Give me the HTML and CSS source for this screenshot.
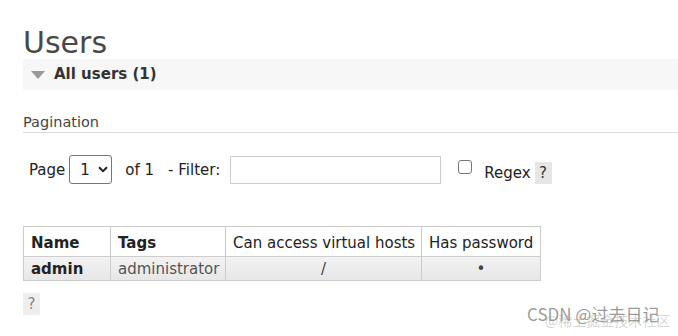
FILE: index.html
```html
<!DOCTYPE html>
<html>
<head>
    <meta charset="utf-8"/>
    <title>Users</title>
    <link rel="stylesheet" href="styles.css">
</head>
<body>
    <div class="main">
        <h1>Users</h1>

        <!-- 사용자 목록 섹션 -->
        <div class="section-head">
            <span class="arrow"></span>
            <span class="section-title">All users (1)</span>
        </div>

        <h3 class="pagination-title">Pagination</h3>

        <div class="pagination-row">
            <span>Page</span>
            <div class="page-select">
                <span>1</span>
                <svg width="10" height="7" viewBox="0 0 10 7">
                    <path d="M1 1.2 L5 5.2 L9 1.2" fill="none" stroke="#222" stroke-width="2"/>
                </svg>
            </div>
            <span class="of-text">of 1</span>
            <span class="filter-label">- Filter:</span>
            <input type="text" class="filter-input">
            <span class="checkbox"></span>
            <span class="regex-label">Regex</span>
            <span class="help">?</span>
        </div>

        <table class="users-table">
            <thead>
                <tr>
                    <th class="col-name bold">Name</th>
                    <th class="col-tags bold">Tags</th>
                    <th class="col-vhosts">Can access virtual hosts</th>
                    <th class="col-pass">Has password</th>
                </tr>
            </thead>
            <tbody>
                <tr>
                    <td class="bold">admin</td>
                    <td class="tag">administrator</td>
                    <td class="center">/</td>
                    <td class="center">&#8226;</td>
                </tr>
            </tbody>
        </table>

        <div class="help help-bottom">?</div>
    </div>

    <div class="watermark">
        <span class="wm-main">CSDN @过去日记</span>
        <span class="wm-sub">@稀土掘金技术社区</span>
    </div>
</body>
</html>
```

FILE: styles.css
```css
body {
    margin: 0;
    font-family: "DejaVu Sans", Verdana, "Noto Sans CJK SC", sans-serif;
    color: #333;
    background: #fff;
}
.main {
    padding: 27px 0 0 23px;
}
h1 {
    margin: 0;
    font-size: 30px;
    font-weight: normal;
    line-height: 32px;
    color: #484848;
}

/* 섹션 헤더 */
.section-head {
    display: flex;
    align-items: center;
    height: 31px;
    padding-left: 8px;
    background-color: #f7f7f7;
}
.arrow {
    width: 0;
    height: 0;
    border-left: 7px solid transparent;
    border-right: 7px solid transparent;
    border-top: 8px solid #999;
    margin-right: 9px;
    margin-top: 1px;
}
.section-title {
    font-size: 15px;
    font-weight: bold;
    color: #333;
    line-height: 31px;
}

/* 페이지네이션 */
.pagination-title {
    margin: 23px 0 0 0;
    font-size: 14.5px;
    font-weight: normal;
    line-height: 18px;
    color: #444;
    padding-bottom: 1px;
    border-bottom: 1px solid #ddd;
}
.pagination-row {
    display: flex;
    align-items: center;
    height: 29px;
    margin-top: 22px;
    padding-left: 6px;
    font-size: 15px;
    color: #222;
}
.page-select {
    display: flex;
    align-items: center;
    box-sizing: border-box;
    width: 43px;
    height: 29px;
    margin-left: 4px;
    padding-left: 10px;
    border: 1px solid #767676;
    border-radius: 3px;
    font-size: 15px;
}
.page-select svg {
    margin-left: 8px;
}
.of-text {
    margin-left: 13px;
}
.filter-label {
    margin-left: 14px;
}
.filter-input {
    box-sizing: border-box;
    width: 211px;
    height: 28px;
    margin: 0 0 0 10px;
    border: 1px solid #ccc;
    padding: 0 4px;
    font-family: inherit;
}
.checkbox {
    box-sizing: border-box;
    width: 14px;
    height: 14px;
    margin-left: 17px;
    margin-top: -6px;
    border: 1px solid #767676;
    border-radius: 3px;
    background: #fff;
}
.regex-label {
    margin-left: 12px;
    margin-top: 6px;
}
.help {
    display: inline-block;
    width: 17px;
    height: 22px;
    line-height: 22px;
    text-align: center;
    background-color: #e6e6e6;
    color: #333;
    font-size: 15px;
    margin-left: 4px;
    margin-top: 6px;
}

/* 사용자 테이블 */
.users-table {
    width: 517px;
    margin-top: 42px;
    border-collapse: collapse;
    table-layout: fixed;
    font-size: 15px;
}
.users-table th,
.users-table td {
    border: 1px solid #ccc;
    padding: 0 7px 0 7px;
    text-align: left;
    white-space: nowrap;
    overflow: visible;
}
.users-table th {
    height: 27px;
    font-weight: normal;
    color: #222;
    padding-top: 2px;
}
.users-table th.bold {
    font-weight: bold;
}
.col-name { width: 72px; }
.col-tags { width: 100px; }
.col-vhosts { width: 184px; }
.col-pass { width: 104px; }
.users-table th.col-vhosts {
    padding: 2px 4px 0 7px;
}
.users-table tbody tr {
    background: linear-gradient(#f2f2f2, #e6e6e6);
}
.users-table td {
    height: 22px;
    color: #444;
    padding-top: 1px;
}
.users-table td.bold {
    font-weight: bold;
    color: #222;
}
.users-table td.tag {
    color: #555;
}
.users-table td.center {
    text-align: center;
}
.help-bottom {
    display: block;
    margin: 12px 0 0 0;
    background-color: #eee;
    color: #888;
}

/* 워터마크 */
.watermark {
    position: absolute;
    left: 527px;
    top: 301px;
    width: 150px;
    height: 32px;
}
.wm-main {
    position: absolute;
    left: 0;
    top: 0;
    font-family: "Noto Sans CJK SC", sans-serif;
    font-size: 17px;
    color: rgba(120, 120, 120, 0.75);
    white-space: nowrap;
}
.wm-sub {
    position: absolute;
    left: 18px;
    top: 9px;
    font-family: "Noto Sans CJK SC", sans-serif;
    font-size: 14px;
    color: rgba(160, 160, 160, 0.45);
    white-space: nowrap;
}
```
